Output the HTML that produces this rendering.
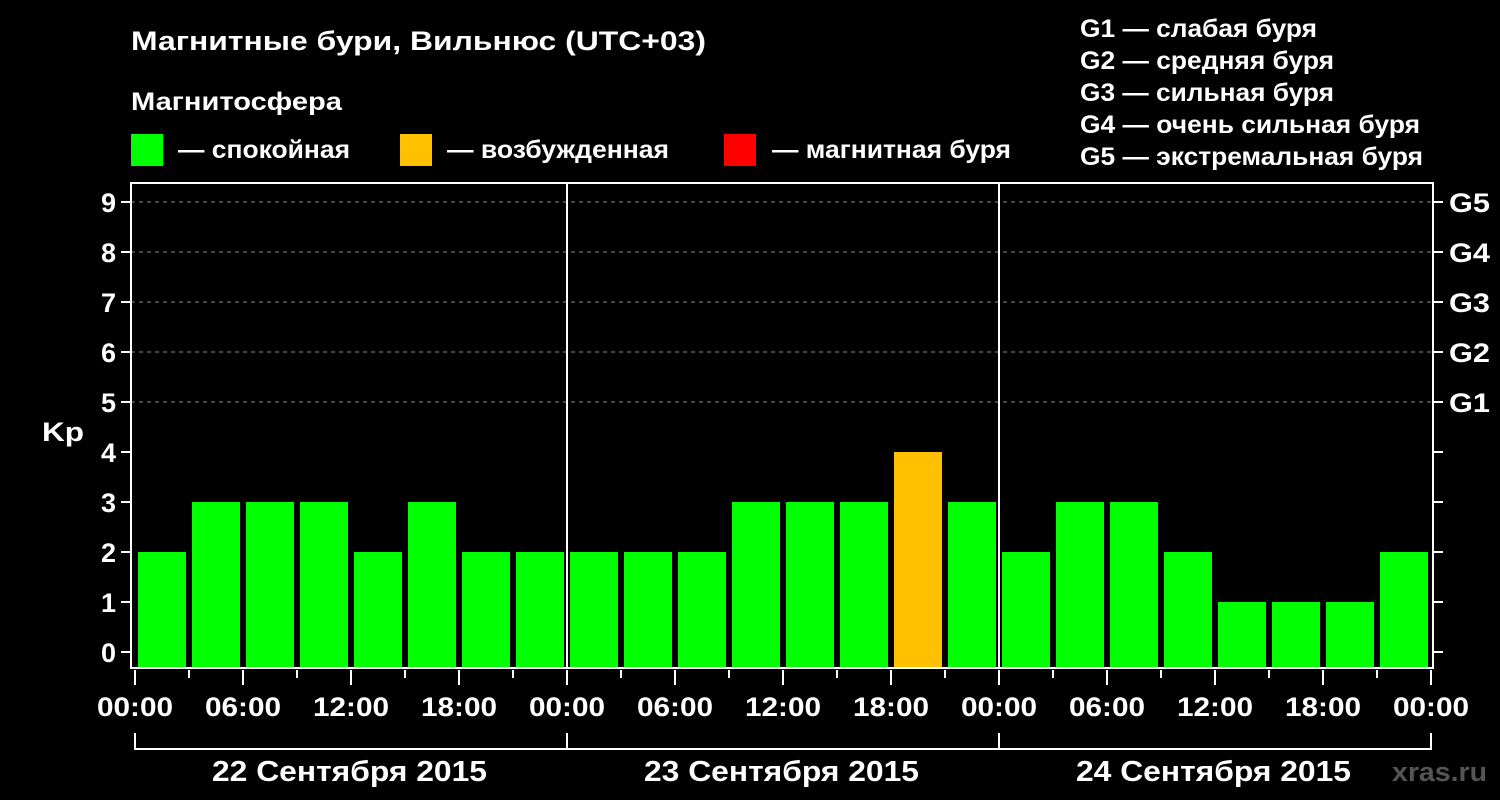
<!DOCTYPE html>
<html><head><meta charset="utf-8"><style>
html,body{margin:0;padding:0;background:#000;}
svg{display:block;font-family:"Liberation Sans",Arial,sans-serif;font-weight:bold;}
</style></head><body>
<svg width="1500" height="800" viewBox="0 0 1500 800" xmlns="http://www.w3.org/2000/svg">
<rect width="1500" height="800" fill="#000"/>
<g fill="#fff" font-size="25" lengthAdjust="spacingAndGlyphs">
<text x="131" y="50" font-size="27" textLength="575" lengthAdjust="spacingAndGlyphs">Магнитные бури, Вильнюс (UTC+03)</text>
<text x="131" y="110" textLength="211" lengthAdjust="spacingAndGlyphs">Магнитосфера</text>
<text x="178" y="158" textLength="172" lengthAdjust="spacingAndGlyphs">— спокойная</text>
<text x="447" y="158" textLength="222" lengthAdjust="spacingAndGlyphs">— возбужденная</text>
<text x="772" y="158" textLength="239" lengthAdjust="spacingAndGlyphs">— магнитная буря</text>
<text x="1080" y="37" textLength="237" lengthAdjust="spacingAndGlyphs">G1 — слабая буря</text>
<text x="1080" y="69" textLength="254" lengthAdjust="spacingAndGlyphs">G2 — средняя буря</text>
<text x="1080" y="101" textLength="254" lengthAdjust="spacingAndGlyphs">G3 — сильная буря</text>
<text x="1080" y="133" textLength="340" lengthAdjust="spacingAndGlyphs">G4 — очень сильная буря</text>
<text x="1080" y="165" textLength="343" lengthAdjust="spacingAndGlyphs">G5 — экстремальная буря</text>
</g>
<rect x="131" y="134" width="32" height="32" fill="#00ff00"/>
<rect x="400" y="134" width="32" height="32" fill="#ffc000"/>
<rect x="724" y="134" width="32" height="32" fill="#ff0000"/>
<g stroke="#888" stroke-dasharray="4,4" stroke-width="1">
<line x1="131" y1="202" x2="1433" y2="202"/>
<line x1="131" y1="252" x2="1433" y2="252"/>
<line x1="131" y1="302" x2="1433" y2="302"/>
<line x1="131" y1="352" x2="1433" y2="352"/>
<line x1="131" y1="402" x2="1433" y2="402"/>
</g>
<g id="bars"></g>
<g stroke="#fff" stroke-width="2" fill="none">
<rect x="131" y="183" width="1302" height="485"/>
<line x1="567" y1="183" x2="567" y2="668"/>
<line x1="999" y1="183" x2="999" y2="668"/>
<polyline points="135,733 135,749 1431,749 1431,733"/>
<line x1="567" y1="733" x2="567" y2="749"/>
<line x1="999" y1="733" x2="999" y2="749"/>
</g>
<g id="ticks" stroke="#fff" stroke-width="2"></g>
<g fill="#fff" font-size="27" text-anchor="end" id="yl"></g>
<g fill="#fff" font-size="27">
<text x="1449" y="212" textLength="41" lengthAdjust="spacingAndGlyphs">G5</text><text x="1449" y="262" textLength="41" lengthAdjust="spacingAndGlyphs">G4</text><text x="1449" y="312" textLength="41" lengthAdjust="spacingAndGlyphs">G3</text><text x="1449" y="362" textLength="41" lengthAdjust="spacingAndGlyphs">G2</text><text x="1449" y="412" textLength="41" lengthAdjust="spacingAndGlyphs">G1</text>
</g>
<text x="42" y="441" fill="#fff" font-size="27" textLength="42" lengthAdjust="spacingAndGlyphs">Kp</text>
<g fill="#fff" font-size="27" id="xl"></g>
<g fill="#fff" font-size="29">
<text x="212" y="781" textLength="275" lengthAdjust="spacingAndGlyphs">22 Сентября 2015</text>
<text x="644" y="781" textLength="275" lengthAdjust="spacingAndGlyphs">23 Сентября 2015</text>
<text x="1076" y="781" textLength="275" lengthAdjust="spacingAndGlyphs">24 Сентября 2015</text>
</g>
<text x="1392" y="781" fill="#555" font-size="27" textLength="95" lengthAdjust="spacingAndGlyphs">xras.ru</text>
<script>
var v=[2,3,3,3,2,3,2,2,2,2,2,3,3,3,4,3,2,3,3,2,1,1,1,2];
var ns="http://www.w3.org/2000/svg",b=document.getElementById("bars");
function el(p,t,a,txt){var e=document.createElementNS(ns,t);for(var k in a)e.setAttribute(k,a[k]);if(txt!=null)e.textContent=txt;p.appendChild(e);}
v.forEach(function(x,i){var top=652-50*x;el(b,"rect",{x:138+54*i,y:top,width:48,height:668-top,fill:x>=4?"#ffc000":"#00ff00"});});
var t=document.getElementById("ticks"),yl=document.getElementById("yl"),xl=document.getElementById("xl");
for(var k=0;k<=9;k++){var y=652-50*k;el(t,"line",{x1:121,y1:y,x2:131,y2:y});el(t,"line",{x1:1433,y1:y,x2:1443,y2:y});el(yl,"text",{x:116,y:y+10},""+k);}
var lab=["00:00","06:00","12:00","18:00"];
for(var i=0;i<=24;i++){var x=135+54*i;el(t,"line",{x1:x,y1:670,x2:x,y2:i%2?678:685});if(i%2==0)el(xl,"text",{x:x-38,y:716,textLength:76,lengthAdjust:"spacingAndGlyphs"},lab[(i/2)%4]);}
</script>
</svg>
</body></html>
